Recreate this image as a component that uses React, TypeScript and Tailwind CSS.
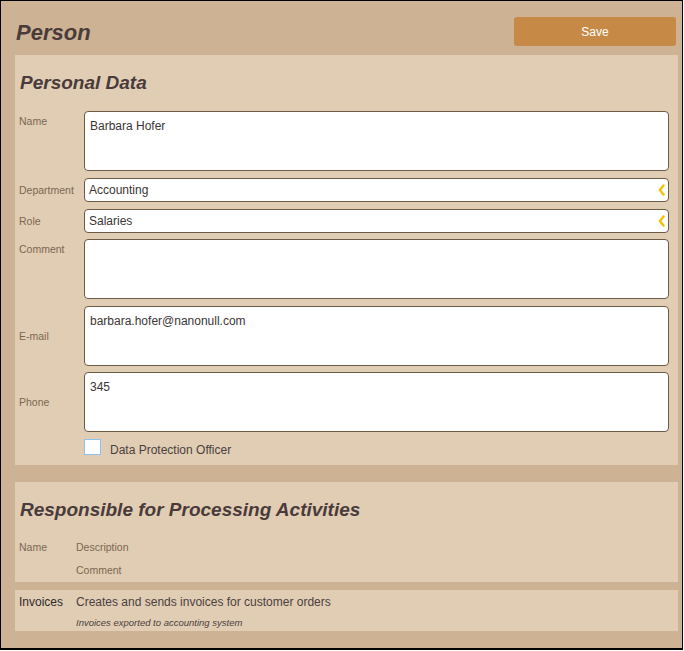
const labelCls = "text-[10.5px] leading-[12px] text-[#7b6752]";
const boxCls = "bg-white border border-[#6e5b47] rounded-[4px] text-[12px] leading-[14px] text-[#3a3535]";

function Chevron() {
  return (
    <svg width="7" height="12" viewBox="0 0 7 12" className="shrink-0">
      <polyline points="5.5,1.5 1.8,6 5.5,10.5" fill="none" stroke="#f2c200" strokeWidth="2.4" strokeLinecap="round" strokeLinejoin="round" />
    </svg>
  );
}

function TextArea({ label, value, align, className }: { label: string; value?: string; align: "top" | "middle"; className?: string }) {
  return (
    <div className={`flex ${align === "middle" ? "items-center" : "items-start"} ${className ?? ""}`}>
      <div className={`w-[65px] ${labelCls} ${align === "top" ? "pt-[4px]" : ""}`}>{label}</div>
      <div className={`flex-1 h-[60px] pt-[7px] pl-[5px] ${boxCls}`}>{value}</div>
    </div>
  );
}

function Select({ label, value, className }: { label: string; value: string; className?: string }) {
  return (
    <div className={`flex items-center ${className ?? ""}`}>
      <div className={`w-[65px] ${labelCls}`}>{label}</div>
      <div className={`flex-1 h-[24px] flex items-center justify-between pl-[4px] pr-[3px] ${boxCls}`}>
        <span>{value}</span>
        <Chevron />
      </div>
    </div>
  );
}

export default function App() {
  return (
    <div className="w-[683px] h-[650px] border border-b-2 border-black bg-[#cdb294] pl-[14px] pr-[4px] font-['Liberation_Sans',Arial,sans-serif]">
      <header className="h-[54px] pt-[16px] flex justify-between items-start">
        <h1 className="mt-[3px] pl-[1px] text-[22px] leading-[25px] font-bold italic text-[#4a3b3b]">Person</h1>
        <button className="mr-[2px] w-[162px] h-[29px] rounded-[3px] bg-[#c68a46] text-white text-[12px]">Save</button>
      </header>

      {/* Personal data */}
      <section className="bg-[#e1cdb4] pt-[17px] pb-[8px] pl-[4px] pr-[9px]">
        <h2 className="pl-[1px] text-[19px] leading-[22px] font-bold italic text-[#4a3b3b]">Personal Data</h2>
        <TextArea label="Name" value="Barbara Hofer" align="top" className="mt-[17px]" />
        <Select label="Department" value="Accounting" className="mt-[7px]" />
        <Select label="Role" value="Salaries" className="mt-[7px]" />
        <TextArea label="Comment" align="top" className="mt-[6px]" />
        <TextArea label="E-mail" value="barbara.hofer@nanonull.com" align="middle" className="mt-[7px]" />
        <TextArea label="Phone" value="345" align="middle" className="mt-[6px]" />
        <div className="mt-[7px] flex items-start pl-[65px]">
          <div className="w-[17px] h-[16px] border border-[#8ec0f0] bg-white" />
          <span className="ml-[9px] mt-[4px] text-[12px] leading-[14px] text-[#4a3f3f]">Data Protection Officer</span>
        </div>
      </section>

      {/* Processing activities */}
      <section className="mt-[17px] bg-[#e1cdb4] pt-[17px] pb-[6px] pl-[4px] pr-[9px]">
        <h2 className="pl-[1px] text-[19px] leading-[22px] font-bold italic text-[#4a3b3b]">Responsible for Processing Activities</h2>
        <div className={`mt-[20px] flex ${labelCls}`}>
          <div className="w-[57px]">Name</div>
          <div>Description</div>
        </div>
        <div className={`mt-[11px] pl-[57px] ${labelCls}`}>Comment</div>
      </section>

      <section className="mt-[8px] bg-[#e1cdb4] pt-[5px] pb-[3px] pl-[4px] pr-[9px]">
        <div className="flex text-[12px] leading-[14px]">
          <div className="w-[57px] text-[#2e2a2a]">Invoices</div>
          <div className="text-[#4a4040]">Creates and sends invoices for customer orders</div>
        </div>
        <div className="mt-[8px] pl-[57px] text-[9.5px] leading-[11px] italic text-[#4a4040]">Invoices exported to accounting system</div>
      </section>
    </div>
  );
}
